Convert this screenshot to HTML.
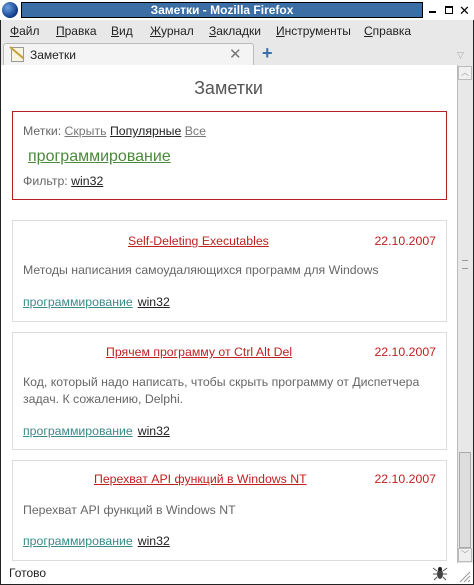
<!DOCTYPE html><html><head><meta charset="utf-8"><style>
*{margin:0;padding:0;box-sizing:border-box}
body{width:474px;height:585px;position:relative;overflow:hidden;background:#fff;font-family:"Liberation Sans","DejaVu Sans",sans-serif;font-size:12px}
.a{position:absolute}
a{color:inherit;text-decoration:underline}
.card{position:absolute;left:12px;width:435px;border:1px solid #ddd;background:#fff}
.t{position:absolute;font-size:12.3px;color:#c02020;text-decoration:underline}
.d{position:absolute;right:10px;color:#c02020;font-size:12.3px}
.ds{position:absolute;left:10px;color:#666;font-size:12.3px;line-height:17px}
.tg{position:absolute;left:10px;font-size:12.3px}
.tg span{color:#3a8a8a;text-decoration:underline}
.tg b{font-weight:normal;color:#222;text-decoration:underline;margin-left:5px}
</style></head><body>
<div class="a" style="left:0;top:0;width:474px;height:585px;border:1px solid #222;border-top:none"></div>
<div class="a" style="left:0;top:0;width:474px;height:20px;background:#fff"></div>
<div class="a" style="left:2px;top:2px;width:16px;height:16px;border-radius:50%;background:radial-gradient(circle at 35% 35%,#6aa0e0,#0d3a8a 70%,#051a40)"></div>
<div class="a" style="left:21px;top:2px;width:402px;height:16px;background:#3a6ea5;border:1px solid #000;color:#fff;font-weight:bold;text-align:center;line-height:14px;font-size:12px">Заметки - Mozilla Firefox</div>
<div class="a" style="left:429px;top:11px;width:7px;height:2px;background:#000"></div>
<div class="a" style="left:445px;top:6px;width:8px;height:8px;border:1px solid #000;border-top-width:2px"></div>
<div class="a" style="left:459px;top:3px;font-size:13px;font-weight:bold">✕</div>
<div class="a" style="left:1px;top:20px;width:472px;height:543px;background:#e8e8e8"></div>
<div class="a" style="top:24px;left:10px;font-size:12px;color:#222;word-spacing:0">
<span class="a" style="left:0"><u>Ф</u>айл</span><span class="a" style="left:46px"><u>П</u>равка</span><span class="a" style="left:101px"><u>В</u>ид</span><span class="a" style="left:140px"><u>Ж</u>урнал</span><span class="a" style="left:199px"><u>З</u>акладки</span><span class="a" style="left:266px;white-space:nowrap"><u>И</u>нструменты</span><span class="a" style="left:354px"><u>С</u>правка</span></div>
<div class="a" style="left:3px;top:43px;width:251px;height:23px;background:#f4f4f4;border:1px solid #bbb;border-bottom:none;border-radius:3px 3px 0 0"></div>
<div class="a" style="left:11px;top:47px;width:13px;height:15px;background:#f8f4e0;border:1px solid #999"></div>
<div class="a" style="left:10px;top:46px;width:18px;height:2px;background:#c8a040;transform:rotate(40deg);transform-origin:left;"></div>
<div class="a" style="left:30px;top:48px;font-size:12px;color:#222">Заметки</div>
<div class="a" style="left:229px;top:45px;font-size:15px;color:#777;font-weight:bold">✕</div>
<div class="a" style="left:262px;top:43px;font-size:18px;color:#3a6ea5;font-weight:bold">+</div>
<div class="a" style="left:457px;top:50px;font-size:9px;color:#aaa">▽</div>
<div class="a" style="left:1px;top:65px;width:456px;height:498px;background:#fff"></div>
<div class="a" style="left:457px;top:65px;width:16px;height:498px;background:#e8e8e8;border-left:1px solid #bbb"></div>
<div class="a" style="left:458px;top:66px;width:14px;height:14px;border:1px solid #bbb;background:#f0f0f0;font-size:8px;color:#999;text-align:center;line-height:12px">︿</div>
<div class="a" style="left:459px;top:452px;width:12px;height:96px;background:#ddd;border:1px solid #aaa"></div>
<div class="a" style="left:458px;top:548px;width:14px;height:14px;border:1px solid #bbb;background:#f0f0f0;font-size:8px;color:#999;text-align:center;line-height:12px">﹀</div>
<div class="a" style="left:462px;top:260px;width:6px;height:9px;border-top:1px solid #999;border-bottom:1px solid #999"></div>
<div class="a" style="left:0;top:78px;width:457px;text-align:center;font-size:18px;color:#555">Заметки</div>
<div class="a" style="left:12px;top:111px;width:435px;height:89px;border:1px solid #b52025"></div>
<div class="a" style="left:23px;top:124px;color:#666;font-size:12.3px">Метки: <a style="color:#777">Скрыть</a> <a style="color:#222">Популярные</a> <a style="color:#777">Все</a></div>
<div class="a" style="left:28px;top:148px;font-size:16px;color:#4a8a3a;text-decoration:underline">программирование</div>
<div class="a" style="left:23px;top:174px;color:#666;font-size:12.3px">Фильтр: <a style="color:#222">win32</a></div>
<div class="card" style="top:220px;height:102px"><div class="t" style="left:115px;top:13px">Self-Deleting Executables</div><div class="d" style="top:13px">22.10.2007</div><div class="ds" style="top:41px">Методы написания самоудаляющихся программ для Windows</div><div class="tg" style="top:74px"><span>программирование</span><b>win32</b></div></div>
<div class="card" style="top:332px;height:118px"><div class="t" style="left:93px;top:12px">Прячем программу от Ctrl Alt Del</div><div class="d" style="top:12px">22.10.2007</div><div class="ds" style="top:41px;width:415px">Код, который надо написать, чтобы скрыть программу от Диспетчера задач. К сожалению, Delphi.</div><div class="tg" style="top:91px"><span>программирование</span><b>win32</b></div></div>
<div class="card" style="top:460px;height:101px"><div class="t" style="left:81px;top:11px">Перехват API функций в Windows NT</div><div class="d" style="top:11px">22.10.2007</div><div class="ds" style="top:41px">Перехват API функций в Windows NT</div><div class="tg" style="top:73px"><span>программирование</span><b>win32</b></div></div>
<div class="a" style="left:9px;top:566px;color:#222">Готово</div>
<svg class="a" style="left:432px;top:565px" width="16" height="16" viewBox="0 0 16 16"><ellipse cx="8" cy="9" rx="3" ry="5" fill="#444"/><circle cx="8" cy="4" r="2" fill="#222"/><path d="M5 6L1 3M5 9L1 9M5 12L2 15M11 6L15 3M11 9L15 9M11 12L14 15" stroke="#555" stroke-width="1"/></svg>
<svg class="a" style="left:458px;top:570px" width="13" height="13"><path d="M12 2L2 12M12 6L6 12M12 10L10 12" stroke="#999"/></svg>
</body></html>
